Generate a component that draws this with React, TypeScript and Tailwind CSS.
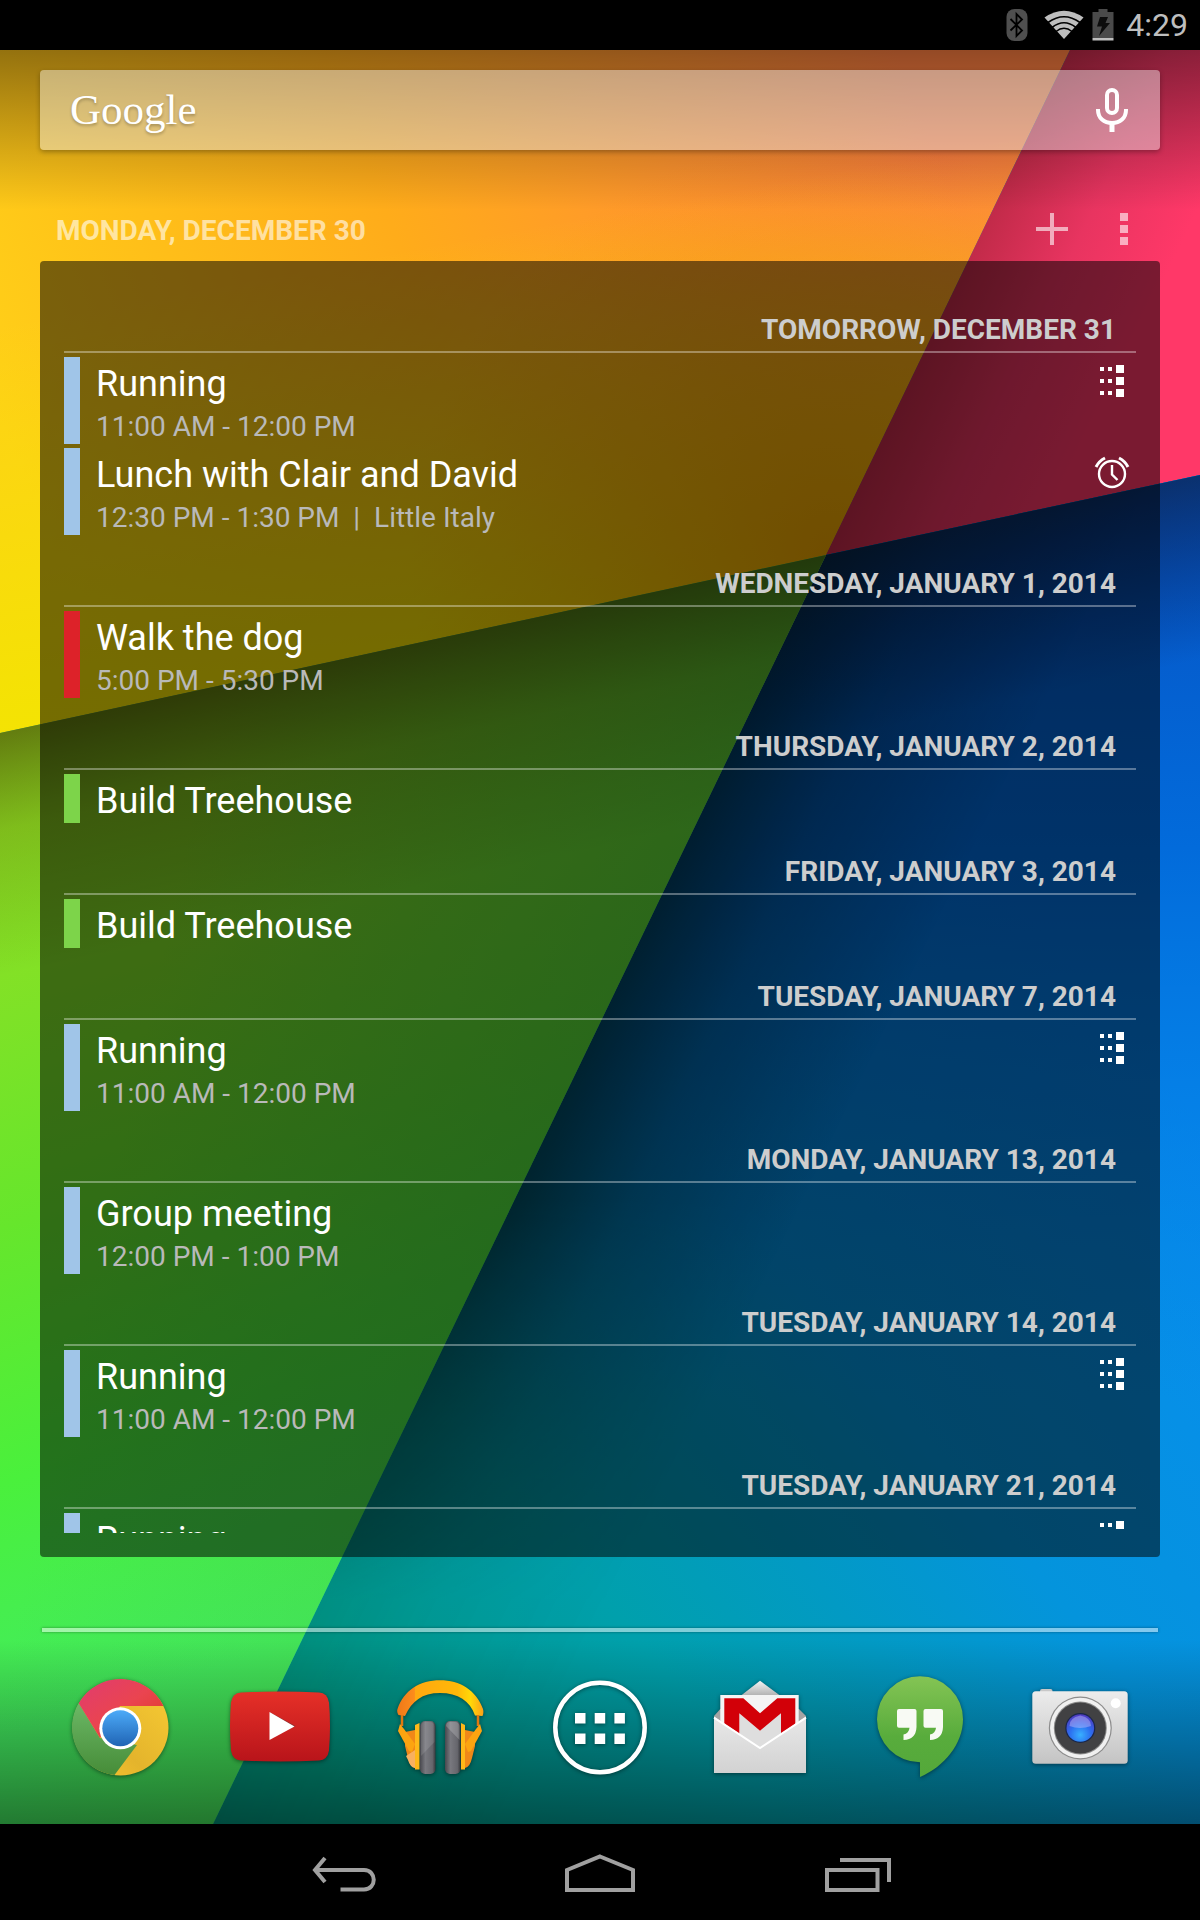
import type { ReactNode } from 'react';

type EventIcon = 'repeat' | 'alarm';

type CalendarEvent = {
  title: string;
  time?: string;
  color: 'blue' | 'red' | 'green';
  icon?: EventIcon;
};

type Day = {
  label: string;
  events: CalendarEvent[];
};

const days: Day[] = [
  {
    label: 'TOMORROW, DECEMBER 31',
    events: [
      { title: 'Running', time: '11:00 AM - 12:00 PM', color: 'blue', icon: 'repeat' },
      {
        title: 'Lunch with Clair and David',
        time: '12:30 PM - 1:30 PM  |  Little Italy',
        color: 'blue',
        icon: 'alarm',
      },
    ],
  },
  {
    label: 'WEDNESDAY, JANUARY 1, 2014',
    events: [{ title: 'Walk the dog', time: '5:00 PM - 5:30 PM', color: 'red' }],
  },
  { label: 'THURSDAY, JANUARY 2, 2014', events: [{ title: 'Build Treehouse', color: 'green' }] },
  { label: 'FRIDAY, JANUARY 3, 2014', events: [{ title: 'Build Treehouse', color: 'green' }] },
  {
    label: 'TUESDAY, JANUARY 7, 2014',
    events: [{ title: 'Running', time: '11:00 AM - 12:00 PM', color: 'blue', icon: 'repeat' }],
  },
  {
    label: 'MONDAY, JANUARY 13, 2014',
    events: [{ title: 'Group meeting', time: '12:00 PM - 1:00 PM', color: 'blue' }],
  },
  {
    label: 'TUESDAY, JANUARY 14, 2014',
    events: [{ title: 'Running', time: '11:00 AM - 12:00 PM', color: 'blue', icon: 'repeat' }],
  },
  {
    label: 'TUESDAY, JANUARY 21, 2014',
    events: [{ title: 'Running', time: '11:00 AM - 12:00 PM', color: 'blue', icon: 'repeat' }],
  },
];

const barColors = {
  blue: 'bg-[#a0c5e8]',
  red: 'bg-[#dd2229]',
  green: 'bg-[#7dd44a]',
};

function Wallpaper() {
  return (
    <svg
      className="absolute inset-0 h-full w-full"
      viewBox="0 50 1200 1774"
      preserveAspectRatio="none"
      aria-hidden="true"
    >
      <defs>
        <linearGradient id="wpYellow" gradientUnits="userSpaceOnUse" x1="0" y1="420" x2="900" y2="60">
          <stop offset="0" stopColor="#ffd018" />
          <stop offset="0.45" stopColor="#ffac1a" />
          <stop offset="1" stopColor="#ff7f40" />
        </linearGradient>
        <linearGradient id="wpYellowLow" gradientUnits="userSpaceOnUse" x1="350" y1="260" x2="420" y2="640">
          <stop offset="0" stopColor="#f2e600" stopOpacity="0" />
          <stop offset="1" stopColor="#f2e600" stopOpacity="0.85" />
        </linearGradient>
        <radialGradient id="wpYellowTip" gradientUnits="userSpaceOnUse" cx="830" cy="555" r="420">
          <stop offset="0" stopColor="#e89000" stopOpacity="0.75" />
          <stop offset="1" stopColor="#f0a000" stopOpacity="0" />
        </radialGradient>
        <linearGradient id="wpPink" gradientUnits="userSpaceOnUse" x1="950" y1="290" x2="1120" y2="372">
          <stop offset="0" stopColor="#c02a48" />
          <stop offset="0.5" stopColor="#e83460" />
          <stop offset="1" stopColor="#ff3868" />
        </linearGradient>
        <linearGradient id="wpGreen" gradientUnits="userSpaceOnUse" x1="0" y1="720" x2="300" y2="1640">
          <stop offset="0" stopColor="#a0dc20" />
          <stop offset="0.5" stopColor="#66e62c" />
          <stop offset="0.75" stopColor="#4af03c" />
          <stop offset="1" stopColor="#42ec60" />
        </linearGradient>
        <linearGradient id="wpGreenRight" gradientUnits="userSpaceOnUse" x1="150" y1="1000" x2="700" y2="1120">
          <stop offset="0" stopColor="#44d044" stopOpacity="0" />
          <stop offset="1" stopColor="#48cc44" stopOpacity="0.6" />
        </linearGradient>
        <linearGradient id="wpGreenShade" gradientUnits="userSpaceOnUse" x1="400" y1="647" x2="450" y2="880">
          <stop offset="0" stopColor="#2c2400" stopOpacity="0.52" />
          <stop offset="0.4" stopColor="#2c3800" stopOpacity="0.2" />
          <stop offset="1" stopColor="#103000" stopOpacity="0" />
        </linearGradient>
        <linearGradient id="wpBlue" gradientUnits="userSpaceOnUse" x1="260" y1="1700" x2="1100" y2="1000">
          <stop offset="0" stopColor="#009a80" />
          <stop offset="0.3" stopColor="#00a0ac" />
          <stop offset="0.62" stopColor="#0494dc" />
          <stop offset="1" stopColor="#088cf0" />
        </linearGradient>
        <linearGradient id="wpBlueTop" gradientUnits="userSpaceOnUse" x1="0" y1="480" x2="0" y2="1400">
          <stop offset="0" stopColor="#0850c0" />
          <stop offset="0.4" stopColor="#0060d4" stopOpacity="0.75" />
          <stop offset="1" stopColor="#0080e0" stopOpacity="0" />
        </linearGradient>
        <linearGradient id="wpBlueEdge" gradientUnits="userSpaceOnUse" x1="606" y1="1011" x2="840" y2="1124">
          <stop offset="0" stopColor="#002018" stopOpacity="0.6" />
          <stop offset="0.4" stopColor="#002028" stopOpacity="0.27" />
          <stop offset="1" stopColor="#001830" stopOpacity="0" />
        </linearGradient>
        <linearGradient id="wpBlueFade" gradientUnits="userSpaceOnUse" x1="0" y1="1200" x2="0" y2="1600">
          <stop offset="0" stopColor="#fff" />
          <stop offset="1" stopColor="#2a2a2a" />
        </linearGradient>
        <mask id="wpBlueMask" maskUnits="userSpaceOnUse" x="0" y="0" width="1200" height="1920">
          <rect width="1200" height="1920" fill="url(#wpBlueFade)" />
        </mask>
        <linearGradient id="wpBlueShade" gradientUnits="userSpaceOnUse" x1="1000" y1="518" x2="1038" y2="695">
          <stop offset="0" stopColor="#0c1c38" stopOpacity="0.6" />
          <stop offset="1" stopColor="#001850" stopOpacity="0" />
        </linearGradient>
        <linearGradient id="wpTop" x1="0" y1="0" x2="0" y2="1">
          <stop offset="0" stopColor="#000" stopOpacity="0.42" />
          <stop offset="1" stopColor="#000" stopOpacity="0" />
        </linearGradient>
        <linearGradient id="wpBottom" x1="0" y1="0" x2="0" y2="1">
          <stop offset="0" stopColor="#000" stopOpacity="0" />
          <stop offset="1" stopColor="#000" stopOpacity="0.48" />
        </linearGradient>
      </defs>
      <rect y="50" width="1200" height="1774" fill="#009ea8" />
      <path d="M0 50H1070L826 555L0 733Z" fill="url(#wpYellow)" />
      <path d="M0 50H1070L826 555L0 733Z" fill="url(#wpYellowLow)" />
      <path d="M0 50H1070L826 555L0 733Z" fill="url(#wpYellowTip)" />
      <path d="M1070 50H1200V475L826 555Z" fill="url(#wpPink)" />
      <path d="M826 555L1200 475V1824H213Z" fill="url(#wpBlue)" />
      <path d="M826 555L1200 475V1824H213Z" fill="url(#wpBlueTop)" />
      <path d="M826 555L1200 475V1824H213Z" fill="url(#wpBlueEdge)" mask="url(#wpBlueMask)" />
      <path d="M826 555L1200 475V1824H213Z" fill="url(#wpBlueShade)" />
      <path d="M0 733L826 555L213 1824H0Z" fill="url(#wpGreen)" />
      <path d="M0 733L826 555L213 1824H0Z" fill="url(#wpGreenRight)" />
      <path d="M0 733L826 555L213 1824H0Z" fill="url(#wpGreenShade)" />
      <rect y="50" width="1200" height="160" fill="url(#wpTop)" />
      <rect y="1640" width="1200" height="184" fill="url(#wpBottom)" />
    </svg>
  );
}

function StatusBar() {
  return (
    <header className="flex h-[50px] shrink-0 items-center justify-end bg-black pr-3 text-[#bebebe]">
      <svg width="22" height="34" viewBox="0 0 22 34" aria-label="Bluetooth">
        <rect x="0.5" y="1" width="21" height="32" rx="8" fill="#4f4f4f" />
        <path d="M4.500 11L16 22.500L10.500 28V6L16 11.500L4.500 22.500" fill="none" stroke="#000" strokeWidth="1.800" />
      </svg>
      <svg className="ml-4" width="40" height="30" viewBox="0 0 40 30" aria-label="Wi-Fi">
        <path d="M20 29L0.500 7.500Q20 -6 39.500 7.500Z" fill="#bebebe" />
        <g fill="none" stroke="#000" strokeWidth="1.600">
          <path d="M4 12.500Q20 1 36 12.500" />
          <path d="M8 17.500Q20 8 32 17.500" />
          <path d="M12 21.500Q20 15 28 21.500" />
        </g>
      </svg>
      <svg className="ml-2" width="22" height="34" viewBox="0 0 22 34" aria-label="Charging">
        <path d="M6.500 1H15.500V4H21.500V30H0.500V4H6.500Z" fill="#4a4a4a" />
        <path d="M0.500 30H21.500V32.500H0.500Z" fill="#bebebe" />
        <path d="M8 9H16L13.500 15H18L7 28L10 18.500H5Z" fill="#0c0c0c" />
      </svg>
      <time className="ml-3 text-[32px] leading-[38px]">4:29</time>
    </header>
  );
}

function SearchBar() {
  return (
    <form
      className="flex h-20 shrink-0 items-center rounded bg-white/42 pr-7 pl-[30px] shadow-[0_2px_5px_rgba(0,0,0,0.3)]"
      role="search"
    >
      <label
        htmlFor="search"
        className="font-['Liberation_Serif',serif] text-[43px] leading-[60px] text-white [text-shadow:0_2px_3px_rgba(0,0,0,0.25)]"
      >
        Google
      </label>
      <input id="search" type="text" className="h-full min-w-0 flex-1 bg-transparent px-4 text-3xl text-white outline-none" />
      <button type="button" aria-label="Voice search">
        <svg width="40" height="48" viewBox="0 0 40 48" fill="none" stroke="#fff">
          <rect x="15" y="4" width="10" height="23" rx="5" strokeWidth="4" />
          <path d="M6 23V24C6 32 12 37 20 37S34 32 34 24V23" strokeWidth="4" />
          <path d="M20 37V46" strokeWidth="5" />
        </svg>
      </button>
    </form>
  );
}

function RepeatIcon() {
  return (
    <svg width="36" height="36" viewBox="0 0 36 36" fill="#fff" aria-label="Repeats">
      <path d="M6 4h4v4h-4zM14 4h4v4h-4zM22 2h8v8h-8zM6 16h4v4h-4zM14 16h4v4h-4zM22 14h8v8h-8zM6 28h4v4h-4zM14 28h4v4h-4zM22 26h8v8h-8z" />
    </svg>
  );
}

function AlarmIcon() {
  return (
    <svg width="36" height="36" viewBox="0 0 36 36" fill="none" stroke="#fff" strokeWidth="2.400" aria-label="Reminder">
      <circle cx="18" cy="20" r="13" />
      <path d="M18 11V20.500L23.500 26" />
      <path d="M2 13Q5 7 11 4" strokeWidth="3" />
      <path d="M34 13Q31 7 25 4" strokeWidth="3" />
    </svg>
  );
}

function EventRow({ event }: { event: CalendarEvent }) {
  return (
    <div className="flex shrink-0">
      <div className={`w-4 shrink-0 ${barColors[event.color]}`} />
      <div className="min-w-0 flex-1 pt-[5px] pl-4">
        <h3 className="text-4xl leading-11 text-white">{event.title}</h3>
        {event.time && (
          <p className="pt-1 text-[28px] leading-[34px] whitespace-pre text-[#b9b9b9]">{event.time}</p>
        )}
      </div>
      {event.icon && (
        <div className="pt-1.5 pr-1.5">{event.icon === 'repeat' ? <RepeatIcon /> : <AlarmIcon />}</div>
      )}
    </div>
  );
}

function Agenda() {
  return (
    <section className="flex min-h-0 flex-1 flex-col">
      <div className="mt-[47px] flex h-16 shrink-0 items-center pl-4">
        <h1 className="flex-1 pt-1 text-[28px] leading-8 font-bold text-white/60">MONDAY, DECEMBER 30</h1>
        <button type="button" aria-label="New event">
          <svg width="72" height="48" viewBox="0 0 72 48" fill="#fff" fillOpacity="0.6">
            <path d="M34 8h4v14h14v4h-14v14h-4v-14h-14v-4h14z" />
          </svg>
        </button>
        <button type="button" aria-label="More options">
          <svg width="72" height="48" viewBox="0 0 72 48" fill="#fff" fillOpacity="0.6">
            <path d="M32 8h8v8h-8zM32 20h8v8h-8zM32 32h8v8h-8z" />
          </svg>
        </button>
      </div>
      <div className="flex min-h-0 flex-1 flex-col rounded bg-black/52 p-6">
        <div className="flex min-h-0 flex-1 flex-col gap-1 overflow-hidden">
          {days.map((day) => (
            <div key={day.label} className="flex shrink-0 flex-col gap-1">
              <h2 className="flex h-[68px] items-end justify-end border-b-2 border-white/35 pr-5 pb-[5px] text-[28px] leading-8 font-bold text-[#cdcdcd]">
                {day.label}
              </h2>
              {day.events.map((event) => (
                <EventRow key={event.title} event={event} />
              ))}
            </div>
          ))}
        </div>
      </div>
    </section>
  );
}

function DockIcon({ label, children }: { label: string; children: ReactNode }) {
  return (
    <button type="button" aria-label={label} className="flex flex-1 justify-center">
      <svg
        width="112"
        height="112"
        viewBox="0 0 112 112"
        className="overflow-visible drop-shadow-[0_1px_2px_rgba(0,0,0,0.45)]"
      >
        {children}
      </svg>
    </button>
  );
}

function Dock() {
  return (
    <div className="flex h-48 shrink-0 items-center">
      <DockIcon label="Chrome">
        <defs>
          <linearGradient id="chRed" x1="0" y1="0" x2="1" y2="1">
            <stop offset="0" stopColor="#e03c70" />
            <stop offset="0.5" stopColor="#ea4450" />
            <stop offset="1" stopColor="#dc3a20" />
          </linearGradient>
          <linearGradient id="chGreen" x1="0" y1="0" x2="0" y2="1">
            <stop offset="0" stopColor="#6cb866" />
            <stop offset="1" stopColor="#468c38" />
          </linearGradient>
          <linearGradient id="chYellow" x1="1" y1="0" x2="0" y2="1">
            <stop offset="0" stopColor="#f8cc34" />
            <stop offset="0.6" stopColor="#e4b42c" />
            <stop offset="1" stopColor="#fcc830" />
          </linearGradient>
          <linearGradient id="chBlue" x1="0" y1="0" x2="0" y2="1">
            <stop offset="0" stopColor="#4caaf8" />
            <stop offset="1" stopColor="#2064b4" />
          </linearGradient>
        </defs>
        <circle cx="56.500" cy="55.500" r="48" fill="url(#chYellow)" />
        <path d="M14.700 31L36 66L73 73L50.500 103.100A48 48 0 0 1 14.700 31Z" fill="url(#chGreen)" />
        <path d="M14.700 31.300A48 48 0 0 1 99.500 34H56L36 66Z" fill="url(#chRed)" />
        <circle cx="56.300" cy="56.300" r="21" fill="#fff" />
        <circle cx="56.300" cy="56.300" r="18" fill="url(#chBlue)" />
      </DockIcon>
      <DockIcon label="YouTube">
        <defs>
          <linearGradient id="yt" x1="0" y1="0" x2="0" y2="1">
            <stop offset="0" stopColor="#e63028" />
            <stop offset="1" stopColor="#b8141a" />
          </linearGradient>
        </defs>
        <path
          d="M17 20.500Q56 18.500 95 20.500Q103.500 21 105 30.500Q107 54 105 78.500Q103.500 88 95 88.500Q56 90.500 17 88.500Q8.500 88 7 78.500Q5 54 7 30.500Q8.500 21 17 20.500Z"
          fill="url(#yt)"
        />
        <path d="M45.500 40L71.500 54L66 57Z" fill="#8c3030" />
        <path d="M45.500 40L70.500 54.500L45.500 68Z" fill="#fff" />
      </DockIcon>
      <DockIcon label="Play Music">
        <defs>
          <linearGradient id="hpBand" x1="0" y1="0" x2="1" y2="0">
            <stop offset="0" stopColor="#f07818" />
            <stop offset="0.2" stopColor="#fc8c1c" />
            <stop offset="0.21" stopColor="#ffa810" />
            <stop offset="0.7" stopColor="#ffb808" />
            <stop offset="0.85" stopColor="#ffd808" />
            <stop offset="1" stopColor="#fca018" />
          </linearGradient>
          <linearGradient id="hpPad" x1="0" y1="0" x2="1" y2="0">
            <stop offset="0" stopColor="#48484e" />
            <stop offset="0.35" stopColor="#78787e" />
            <stop offset="0.8" stopColor="#66666c" />
            <stop offset="1" stopColor="#38383c" />
          </linearGradient>
        </defs>
        <path
          d="M13.500 37C20 18 36 8.300 56 8.300S92 18 99 37Q100 41 98.500 44L91 43.500C86 29 74 21 56 21S28 29 21 44L14.500 43Q12.500 40 13.500 37Z"
          fill="url(#hpBand)"
        />
        <path d="M18 43V54M94 43V54" stroke="#e07810" strokeWidth="2.500" />
        <path d="M21 60L31 58V96Q26 95 24 86L21 74Z" fill="#f08818" />
        <path d="M91 60L81 58V96Q86 95 88 86L91 74Z" fill="#f08818" />
        <path d="M22 84L31 78V96Q26 95 24 88Z" fill="#f8b060" />
        <path d="M16 52L20 57L31 72L28 80L25 79L14 59Z" fill="#fca410" />
        <path d="M96 52L92 57L81 72L84 80L87 79L98 59Z" fill="#fca410" />
        <path d="M31 53L35.500 51V97.500H31ZM77 51L81 53V97.500H77Z" fill="#ffb818" />
        <rect x="36" y="49" width="15.500" height="53" rx="5" fill="url(#hpPad)" />
        <rect x="61" y="49" width="15.500" height="53" rx="5" fill="url(#hpPad)" />
        <path d="M37 84L50.500 70V54Q50 50 46 50H41Q37 50 37 54Z" fill="#fff" fillOpacity="0.12" />
        <path d="M62 54L75.500 68V54Q75 50 71 50H66Q62 50 62 54Z" fill="#fff" fillOpacity="0.2" />
      </DockIcon>
      <DockIcon label="All apps">
        <circle cx="56" cy="55.500" r="44.700" fill="none" stroke="#fff" strokeWidth="4.500" />
        <path
          d="M31 41h10.500v10.500h-10.500zM50.700 41h10.500v10.500h-10.500zM70.400 41h10.500v10.500h-10.500zM31 61.500h10.500v10.500h-10.500zM50.700 61.500h10.500v10.500h-10.500zM70.400 61.500h10.500v10.500h-10.500z"
          fill="#fff"
        />
      </DockIcon>
      <DockIcon label="Gmail">
        <defs>
          <linearGradient id="gmEnv" x1="0" y1="0" x2="0" y2="1">
            <stop offset="0" stopColor="#e8e8e8" />
            <stop offset="1" stopColor="#d2d2d2" />
          </linearGradient>
          <linearGradient id="gmFlap" x1="0" y1="0" x2="0" y2="1">
            <stop offset="0" stopColor="#f4f4f4" />
            <stop offset="1" stopColor="#b4b4b4" />
          </linearGradient>
        </defs>
        <path d="M56 8.700L75.300 23H37.700Z" fill="url(#gmFlap)" />
        <path d="M10 44L16.300 37H95L102 44V62H10Z" fill="#a4a4a4" />
        <path d="M16.300 23H94.700V60L56 78L16.300 60Z" fill="#f4f4f4" />
        <path d="M35.300 41.300L56 58.700L77 41.300V66L56 78L35.300 66Z" fill="#dedede" />
        <path d="M20.300 26.300H39.300L56 41.300L73.300 26.300H91.300V60L77 66V41.300L56 58.700L35.300 41.300V66L20.300 58Z" fill="#d20008" />
        <path d="M10 44.700L56 75.500L102 44.700V101H10Z" fill="url(#gmEnv)" />
        <path d="M10 45.700L56 76L102 45.700" fill="none" stroke="#fff" strokeWidth="2" />
      </DockIcon>
      <DockIcon label="Hangouts">
        <defs>
          <linearGradient id="ho" x1="0" y1="0" x2="0" y2="1">
            <stop offset="0" stopColor="#84c454" />
            <stop offset="0.6" stopColor="#58ac3c" />
            <stop offset="1" stopColor="#54a83a" />
          </linearGradient>
        </defs>
        <path d="M56 4.300A43 43 0 0 1 99 47.300C99 72 80 95 56 105V90.300A43 43 0 0 1 56 4.300Z" fill="url(#ho)" />
        <path
          d="M35 37H50.500Q52.500 37 52.500 39V55Q52 67.500 39.500 68V62.500Q45 61.500 45.500 55.800H35Q33 55.800 33 53.800V39Q33 37 35 37ZM61.500 37H77Q79 37 79 39V55Q78.500 67.500 66 68V62.500Q71.500 61.500 72 55.800H61.500Q59.500 55.800 59.500 53.800V39Q59.500 37 61.500 37Z"
          fill="#f8faf4"
        />
      </DockIcon>
      <DockIcon label="Camera">
        <defs>
          <linearGradient id="camBody" x1="0" y1="0" x2="0" y2="1">
            <stop offset="0" stopColor="#ececec" />
            <stop offset="1" stopColor="#c4c4c4" />
          </linearGradient>
          <radialGradient id="camLens" cx="0.5" cy="0.75" r="0.75">
            <stop offset="0" stopColor="#38b0ff" />
            <stop offset="0.5" stopColor="#2c70f0" />
            <stop offset="1" stopColor="#5038c0" />
          </radialGradient>
        </defs>
        <rect x="16" y="17" width="12.500" height="5" rx="2" fill="#c8c8c8" />
        <rect x="8.300" y="19.300" width="95.400" height="72.400" rx="3.500" fill="url(#camBody)" />
        <circle cx="56.300" cy="56" r="31.500" fill="#8c8c8c" />
        <circle cx="56.300" cy="56" r="30.300" fill="#f0f0f0" />
        <circle cx="56.300" cy="56" r="26.500" fill="#8a8a8a" />
        <circle cx="56.300" cy="56" r="25.500" fill="#414143" />
        <circle cx="56.300" cy="56" r="15" fill="#18264c" />
        <circle cx="56.300" cy="56" r="13.800" fill="url(#camLens)" />
        <path d="M45.500 54Q45 46 56.300 43.500Q67.500 46 67 54Q56 58 45.500 54Z" fill="#d8c8ff" fillOpacity="0.4" />
        <circle cx="91.700" cy="31.300" r="5" fill="#fff" />
      </DockIcon>
    </div>
  );
}

function NavButton({ label, children }: { label: string; children: ReactNode }) {
  return (
    <button type="button" aria-label={label} className="flex w-64 items-center justify-center">
      <svg width="72" height="40" viewBox="0 0 72 40" fill="none" stroke="#a0a0a0" strokeWidth="4">
        {children}
      </svg>
    </button>
  );
}

function NavBar() {
  return (
    <nav className="flex h-24 shrink-0 justify-center bg-black">
      <NavButton label="Back">
        <path d="M17 6L7 18L17 30" />
        <path d="M7 18H56C69 18 69 37.500 56 37.500H32.500" />
      </NavButton>
      <NavButton label="Home">
        <path d="M36 4.500L69 18V38H3V18Z" />
      </NavButton>
      <NavButton label="Recent apps">
        <path d="M20 8H69V30" />
        <path d="M7 18H57.500V38H7Z" />
      </NavButton>
    </nav>
  );
}

export default function App() {
  return (
    <div className="flex h-screen flex-col bg-black font-[Roboto,sans-serif]">
      <StatusBar />
      <main className="relative min-h-0 flex-1">
        <Wallpaper />
        <div className="relative flex h-full flex-col px-10 pt-5">
          <SearchBar />
          <Agenda />
          <hr className="mx-0.5 mt-[71px] h-1 shrink-0 border-0 bg-white/50 shadow-[0_0_3px_rgba(0,0,0,0.4)]" />
          <Dock />
        </div>
      </main>
      <NavBar />
    </div>
  );
}
